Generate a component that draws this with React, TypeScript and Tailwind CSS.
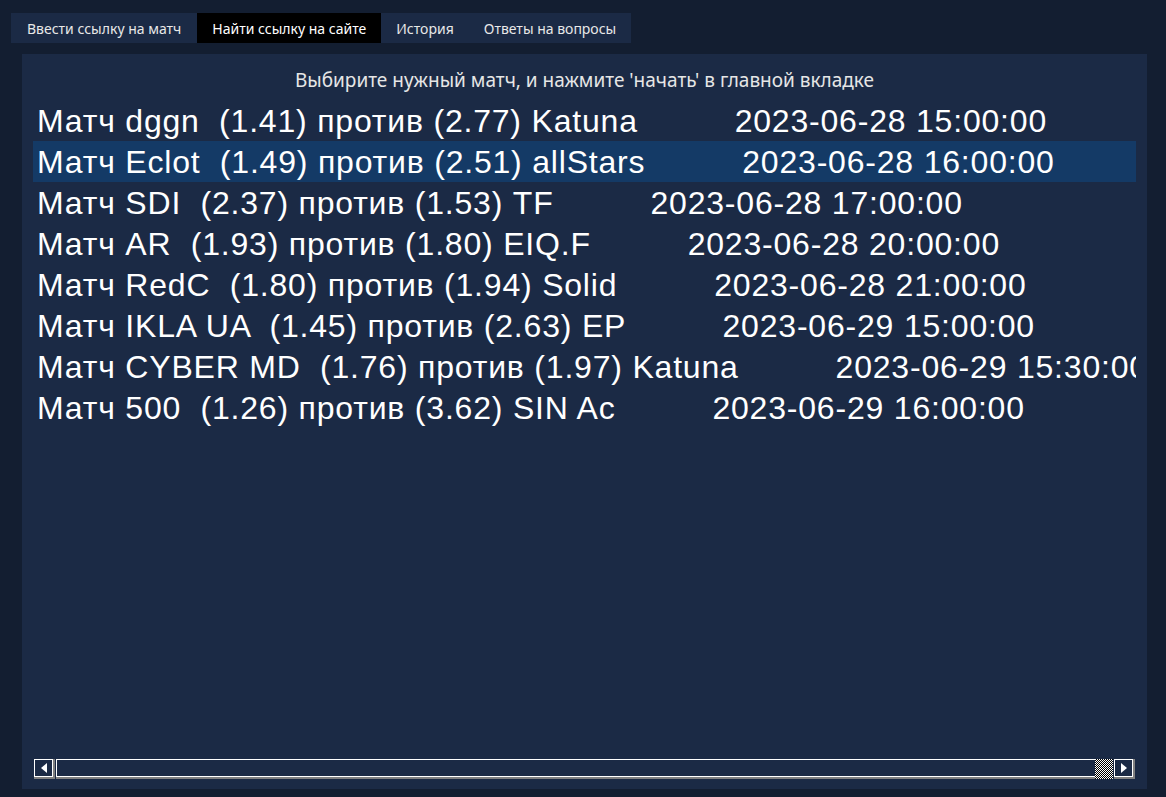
import React from "react";

const rows: [string, string][] = [
  ["Матч dggn  (1.41) против (2.77) Katuna", "2023-06-28 15:00:00"],
  ["Матч Eclot  (1.49) против (2.51) allStars", "2023-06-28 16:00:00"],
  ["Матч SDI  (2.37) против (1.53) TF", "2023-06-28 17:00:00"],
  ["Матч AR  (1.93) против (1.80) EIQ.F", "2023-06-28 20:00:00"],
  ["Матч RedC  (1.80) против (1.94) Solid", "2023-06-28 21:00:00"],
  ["Матч IKLA UA  (1.45) против (2.63) EP", "2023-06-29 15:00:00"],
  ["Матч CYBER MD  (1.76) против (1.97) Katuna", "2023-06-29 15:30:00"],
  ["Матч 500  (1.26) против (3.62) SIN Ac", "2023-06-29 16:00:00"],
];

const tabs = ["Ввести ссылку на матч", "Найти ссылку на сайте", "История", "Ответы на вопросы"];

export default function App() {
  return (
    <div
      className="w-[1166px] h-[797px] bg-[#131e31] pt-[13px] overflow-hidden"
      style={{ fontFamily: "'Noto Sans', 'Open Sans', sans-serif" }}
    >
      <div className="ml-[11px] flex w-fit h-[30px] bg-[#1b2a45]">
        {tabs.map((t, i) => (
          <div
            key={t}
            className={
              i === 1
                ? "h-full flex items-center px-[15px] bg-black text-white text-[14px]"
                : i === 0
                ? "h-full flex items-center px-[16px] text-[#e8e8e8] text-[14px]"
                : "h-full flex items-center px-[15px] text-[#e8e8e8] text-[14px]"
            }
          >
            {t}
          </div>
        ))}
      </div>
      <div className="mt-[11px] ml-[22px] w-[1125px] h-[735px] bg-[#1b2a45] flex flex-col">
        <div className="h-[46px] flex items-center justify-center text-[19px] text-[#e6e6e6] pt-[6px]">
          Выбирите нужный матч, и нажмите 'начать' в главной вкладке
        </div>
        <div
          className="mx-[11px] flex-1 overflow-hidden"
          style={{ fontFamily: "'Liberation Sans', Arial, sans-serif" }}
        >
          {rows.map(([a, b], i) => (
            <div
              key={i}
              className={
                "h-[41px] flex items-center pl-[4px] pt-[1px] text-[32px] tracking-[0.8px] text-white whitespace-pre " +
                (i === 1 ? "bg-[#143a66]" : "")
              }
            >
              {a + "          " + b}
            </div>
          ))}
        </div>
        <div className="mx-[12px] mb-[10px] h-[20px] flex">
          <div className="w-[21px] h-full border-r-2 border-b-2 border-[#808080]">
            <div className="w-full h-full border border-white flex items-center justify-center">
              <svg width="6" height="10" viewBox="0 0 6 10">
                <path d="M6 0 L0 5 L6 10 Z" fill="white" />
              </svg>
            </div>
          </div>
          <div className="flex-1 h-full ml-[1px] border-b-2 border-[#808080]">
            <div className="w-full h-full border-t border-l border-b border-white" />
          </div>
          <div
            className="w-[18px] h-full"
            style={{
              backgroundColor: "#ffffff",
              backgroundImage:
                "linear-gradient(45deg, #000 25%, transparent 25%, transparent 75%, #000 75%), linear-gradient(45deg, #000 25%, transparent 25%, transparent 75%, #000 75%)",
              backgroundSize: "2px 2px",
              backgroundPosition: "0 0, 1px 1px",
            }}
          />
          <div className="w-[21px] h-full ml-[1px] border-r-2 border-b-2 border-[#808080]">
            <div className="w-full h-full border border-white flex items-center justify-center">
              <svg width="6" height="10" viewBox="0 0 6 10">
                <path d="M0 0 L6 5 L0 10 Z" fill="white" />
              </svg>
            </div>
          </div>
        </div>
      </div>
    </div>
  );
}
